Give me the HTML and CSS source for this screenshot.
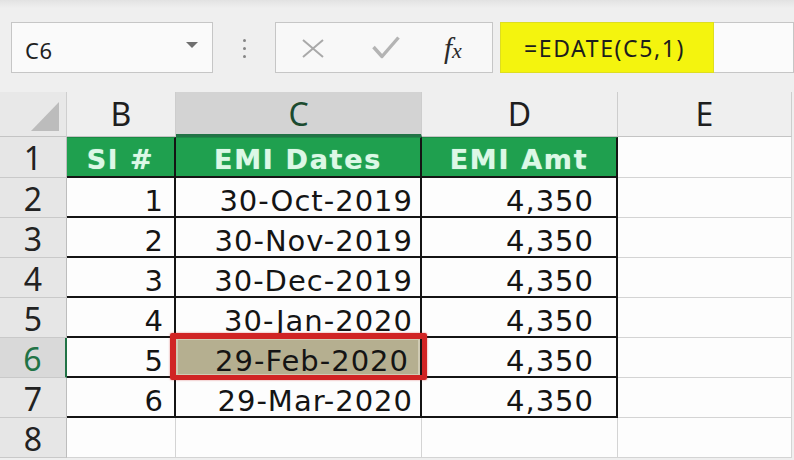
FILE: index.html
```html
<!DOCTYPE html>
<html lang="en">
<head>
<meta charset="utf-8">
<title>EDATE example</title>
<link rel="stylesheet" href="styles.css">
</head>
<body>
<div class="toolbar">
  <div class="namebox">
    <span class="ref">C6</span>
    <svg class="caret" width="12" height="6" viewBox="0 0 12 6"><polygon points="0,0 12,0 6,6" fill="#6f6f6f"/></svg>
  </div>
  <div class="grip"><i></i><i></i><i></i></div>
  <div class="fxgroup">
    <svg class="ico-x" width="22" height="19" viewBox="0 0 22 19"><path d="M1 1 L21 18 M21 1 L1 18" stroke="#a9a9a9" stroke-width="2" fill="none"/></svg>
    <svg class="ico-check" width="28" height="23" viewBox="0 0 28 23"><path d="M1.5 11 L10 20.5 L26.5 1.5" stroke="#b4b4b4" stroke-width="3.4" fill="none" stroke-linejoin="round"/></svg>
    <span class="fx"><i class="f">f</i><i class="x">x</i></span>
  </div>
  <div class="formula">
    <span class="hl">=EDATE(C5,1)</span>
    <span class="rest"></span>
  </div>
</div>

<div class="sheet">
  <div class="corner"><svg width="28" height="29" viewBox="0 0 28 29"><polygon points="28,0 28,29 0,29" fill="#bcbcbc"/></svg></div>
  <div class="ch">B</div>
  <div class="ch sel">C</div>
  <div class="ch">D</div>
  <div class="ch">E</div>

  <div class="rh">1</div>
  <div class="hd">Sl #</div>
  <div class="hd">EMI Dates</div>
  <div class="hd">EMI Amt</div>
  <div class="g"></div>

  <div class="rh">2</div>
  <div class="t num">1</div>
  <div class="t dt">30-Oct-2019</div>
  <div class="t amt">4,350</div>
  <div class="g"></div>

  <div class="rh">3</div>
  <div class="t num">2</div>
  <div class="t dt">30-Nov-2019</div>
  <div class="t amt">4,350</div>
  <div class="g"></div>

  <div class="rh">4</div>
  <div class="t num">3</div>
  <div class="t dt">30-Dec-2019</div>
  <div class="t amt">4,350</div>
  <div class="g"></div>

  <div class="rh">5</div>
  <div class="t num">4</div>
  <div class="t dt">30-Jan-2020</div>
  <div class="t amt">4,350</div>
  <div class="g"></div>

  <div class="rh sel">6</div>
  <div class="t num">5</div>
  <div class="t dt active">29-Feb-2020<span class="mark"></span></div>
  <div class="t amt">4,350</div>
  <div class="g"></div>

  <div class="rh">7</div>
  <div class="t num">6</div>
  <div class="t dt">29-Mar-2020</div>
  <div class="t amt">4,350</div>
  <div class="g"></div>

  <div class="rh">8</div>
  <div class="g"></div>
  <div class="g"></div>
  <div class="g"></div>
  <div class="g"></div>
</div>
</body>
</html>
```

FILE: styles.css
```css
* { box-sizing: border-box; }

html, body {
  margin: 0;
  padding: 0;
}

body {
  width: 794px;
  height: 460px;
  overflow: hidden;
  background: #efefef;
  font-family: "Noto Sans", "Open Sans", sans-serif;
  color: #222;
}

/* ---------- formula toolbar ---------- */
.toolbar {
  height: 92px;
  display: flex;
  align-items: flex-start;
  padding: 22px 0 0 11px;
  background: linear-gradient(#e2e2e2 0, #e9e9e9 4px, #efefef 8px, #efefef 100%);
}

.namebox {
  width: 202px;
  height: 51px;
  border: 1px solid #c6c6c6;
  background: #fafafa;
  display: flex;
  align-items: center;
  justify-content: space-between;
  padding: 0 14px 0 13px;
}

.namebox .ref {
  font-size: 22px;
  line-height: 46px;
  padding-top: 4px;
  letter-spacing: 0.5px;
  color: #1f1f1f;
}

.namebox .caret {
  margin-top: -6px;
}

.grip {
  width: 62px;
  height: 51px;
  display: flex;
  flex-direction: column;
  align-items: center;
  justify-content: center;
  gap: 5px;
  padding-top: 1px;
}

.grip i {
  display: block;
  width: 3px;
  height: 3px;
  border-radius: 50%;
  background: #858585;
}

.fxgroup {
  width: 218px;
  height: 51px;
  border: 1px solid #c6c6c6;
  background: #f8f8f8;
  display: flex;
  align-items: center;
  padding-left: 26px;
}

.ico-x { margin-top: 2px; }

.ico-check { margin-left: 48px; }

.fx {
  margin-left: 44px;
  margin-top: 2px;
  font-family: "Liberation Serif", "DejaVu Serif", serif;
  color: #2a2a2a;
  display: flex;
  align-items: baseline;
}

.fx .f {
  font-size: 29px;
}

.fx .x {
  font-size: 22px;
  margin-left: 0;
}

.formula {
  flex: 1;
  height: 51px;
  margin-left: 7px;
  display: flex;
}

.formula .hl {
  width: 214px;
  height: 51px;
  background: #f4f40e;
  border: 1px solid #dede20;
  padding: 3px 0 0 23px;
  font-size: 23px;
  line-height: 44px;
  letter-spacing: 1.6px;
  color: #1d1d1d;
}

.formula .rest {
  flex: 1;
  height: 51px;
  border: 1px solid #c6c6c6;
  border-left: none;
  background: #fbfbfb;
}

/* ---------- grid ---------- */
.sheet {
  display: grid;
  grid-template-columns: 67px 109px 246px 196px 174px;
  grid-template-rows: 45px 41px repeat(7, 40px);
  background: #fdfdfd;
  width: 792px;
}

.corner {
  background: #e8e8e8;
  border-right: 1px solid #cfcfcf;
  border-bottom: 1px solid #c4c4c4;
  display: flex;
  justify-content: flex-end;
  align-items: flex-end;
  padding: 0 7px 5px 0;
}

.ch {
  background: #efefef;
  border-right: 1px solid #cdcdcd;
  border-bottom: 1px solid #c4c4c4;
  font-size: 32px;
  line-height: 32px;
  padding-top: 6px;
  text-align: center;
  color: #1e1e1e;
}

.ch.sel {
  background: #d3d3d3;
  color: #1b4a2f;
  border-bottom: 3px solid #217346;
}

.rh {
  background: #e6e6e6;
  border-right: 1px solid #bdbdbd;
  border-bottom: 1px solid #c9c9c9;
  font-size: 32px;
  line-height: 32px;
  padding-top: 5px;
  text-align: center;
  color: #222;
}

.rh.sel {
  background: #d9d9d9;
  color: #217346;
  border-right: 2px solid #217346;
}

.hd {
  background: #1fa04f;
  border-right: 2px solid #141414;
  border-bottom: 2px solid #141414;
  border-top: 1px solid #1a8a45;
  font-family: "DejaVu Sans", "Liberation Sans", sans-serif;
  font-weight: bold;
  font-size: 27px;
  line-height: 32px;
  letter-spacing: 1.7px;
  padding-top: 6px;
  text-align: center;
  color: #dcf8e6;
  text-shadow: 0 0 1px #9be0b4;
}

.t {
  background: #fdfdfd;
  border-right: 2px solid #141414;
  border-bottom: 2px solid #141414;
  font-family: "DejaVu Sans", "Liberation Sans", sans-serif;
  font-size: 29px;
  line-height: 32px;
  letter-spacing: 1px;
  padding-top: 7px;
  text-align: right;
  color: #141414;
}

.num { padding-right: 10px; }
.dt { padding-right: 7px; }
.amt { padding-right: 22px; }

.dt.active {
  position: relative;
  background: #b5af90;
  box-shadow: inset 0 0 0 2px #d0cbb4;
  padding-right: 11px;
}

.mark {
  position: absolute;
  left: -6px;
  right: -7px;
  top: -5px;
  bottom: -4px;
  border: solid #d02424;
  border-width: 6px 5px 5px 6px;
  border-radius: 2px;
  box-shadow: 0 0 2px rgba(200, 30, 30, 0.6);
}

.g {
  background: #fdfdfd;
  border-right: 1px solid #d4d4d4;
  border-bottom: 1px solid #d4d4d4;
}
```
